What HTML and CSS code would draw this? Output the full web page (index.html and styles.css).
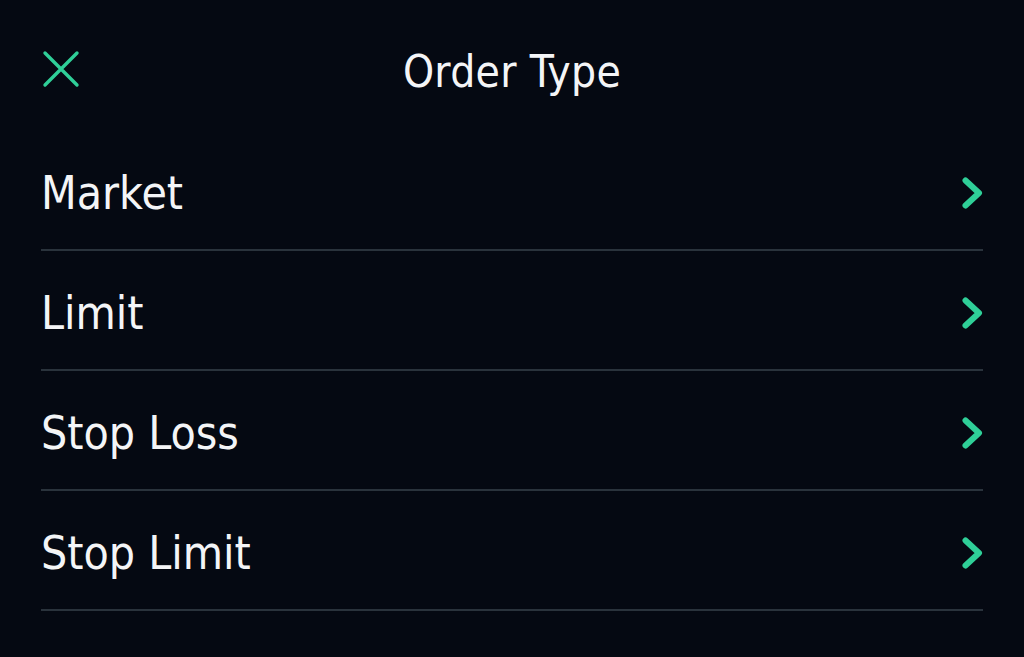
FILE: index.html
```html
<!DOCTYPE html>
<html>
<head>
    <meta charset="utf-8">
    <title>Order Type</title>
    <link rel="stylesheet" href="styles.css">
</head>
<body>
    <div class="header">
        <div class="close-btn">
            <svg width="38" height="38" viewBox="0 0 38 38">
                <path d="M3 3 L35 35 M35 3 L3 35" stroke="#2fcf98" stroke-width="3.4" stroke-linecap="round" fill="none"/>
            </svg>
        </div>
        <h1>Order Type</h1>
    </div>

    <div class="order-list">
        <div class="order-item">
            <span class="order-name">Market</span>
            <svg class="chevron" width="22" height="34" viewBox="0 0 22 34"><path d="M4.5 4.5 L18 17 L4.5 29.5" stroke="#2fcf98" stroke-width="6" stroke-linecap="round" stroke-linejoin="round" fill="none"/></svg>
        </div>
        <div class="order-item">
            <span class="order-name">Limit</span>
            <svg class="chevron" width="22" height="34" viewBox="0 0 22 34"><path d="M4.5 4.5 L18 17 L4.5 29.5" stroke="#2fcf98" stroke-width="6" stroke-linecap="round" stroke-linejoin="round" fill="none"/></svg>
        </div>
        <div class="order-item">
            <span class="order-name">Stop Loss</span>
            <svg class="chevron" width="22" height="34" viewBox="0 0 22 34"><path d="M4.5 4.5 L18 17 L4.5 29.5" stroke="#2fcf98" stroke-width="6" stroke-linecap="round" stroke-linejoin="round" fill="none"/></svg>
        </div>
        <div class="order-item">
            <span class="order-name">Stop Limit</span>
            <svg class="chevron" width="22" height="34" viewBox="0 0 22 34"><path d="M4.5 4.5 L18 17 L4.5 29.5" stroke="#2fcf98" stroke-width="6" stroke-linecap="round" stroke-linejoin="round" fill="none"/></svg>
        </div>
    </div>
</body>
</html>
```

FILE: styles.css
```css
* {
    margin: 0;
    padding: 0;
    box-sizing: border-box;
}

body {
    font-family: "DejaVu Sans Condensed", "DejaVu Sans", sans-serif;
    background: #050912;
    color: #f4f5f7;
    padding: 0 41px;
    height: 657px;
    overflow: hidden;
}

.header {
    position: relative;
    height: 131px;
    display: flex;
    align-items: center;
    justify-content: center;
    padding-top: 12px;
}

.close-btn {
    position: absolute;
    left: 1px;
    top: 50px;
    width: 38px;
    height: 38px;
}

.header h1 {
    font-size: 44px;
    font-weight: normal;
    letter-spacing: 0.3px;
}

.order-item {
    height: 120px;
    border-bottom: 2px solid #2a333c;
    display: flex;
    align-items: center;
    justify-content: space-between;
    padding-top: 6px;
}

.order-name {
    font-size: 46px;
}
```
